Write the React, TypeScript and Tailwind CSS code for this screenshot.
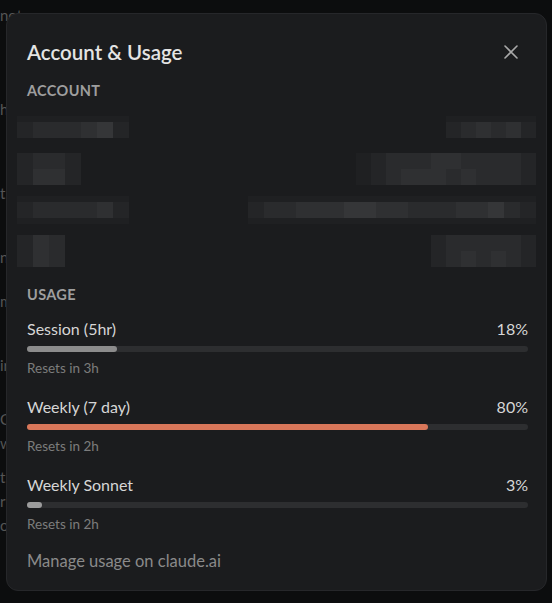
import React from 'react';

const shades: Record<string, string> = {
  '0': 'bg-transparent',
  '1': 'bg-[#1f2022]',
  '2': 'bg-[#242527]',
  '3': 'bg-[#2a2b2d]',
  '4': 'bg-[#2f3032]',
  '5': 'bg-[#353638]',
};

// pixelated placeholder for redacted account values
const Pixels = ({ cells, heights, w = 16 }: { cells: string[]; heights: number[]; w?: number }) => (
  <div className="flex flex-col">
    {cells.map((row, i) => (
      <div key={i} className="flex" style={{ height: heights[i] }}>
        {row.split('').map((c, j) => (
          <div key={j} className={shades[c]} style={{ width: w }} />
        ))}
      </div>
    ))}
  </div>
);

const UsageRow = ({
  label,
  pct,
  reset,
  fill,
}: {
  label: string;
  pct: number;
  reset: string;
  fill: string;
}) => (
  <div className="flex flex-col">
    <div className="flex justify-between text-[16px] leading-5 text-[#d6d6d6]">
      <span>{label}</span>
      <span>{pct}%</span>
    </div>
    <div className="mt-[7px] h-1.5 w-full rounded-full bg-[#2d2e30]">
      <div className={`h-1.5 rounded-full ${fill}`} style={{ width: `${pct}%` }} />
    </div>
    <p className="mt-[8px] text-[13.5px] leading-4 text-[#7c7c7c]">{reset}</p>
  </div>
);

export default function App() {
  return (
    <div
      className="relative w-[552px] h-[603px] overflow-hidden bg-[#0c0d0e]"
      style={{ fontFamily: 'Lato, "Noto Sans", sans-serif' }}
    >
      <div className="text-[15px] leading-[24px] text-[#555] pt-[3px] whitespace-nowrap">
        <p>not.</p>
        <p className="mt-[70px]">h</p>
        <p className="mt-[60px]">t</p>
        <p className="mt-[40px]">n</p>
        <p className="mt-[20px]">m</p>
        <p className="mt-[40px]">ir</p>
        <p className="mt-[30px]">C</p>
        <p>w</p>
        <p className="mt-[10px]">t</p>
        <p>r</p>
        <p>o</p>
      </div>

      <div className="absolute left-[6px] top-[13px] w-[541px] h-[578px] rounded-xl border border-[#26272a] bg-[#1b1c1e] pl-5 pr-[18px] pt-6">
        <div className="flex items-center justify-between">
          <h1 className="text-[20.5px] leading-7 font-semibold text-[#e4e4e4]">Account &amp; Usage</h1>
          <svg width="14" height="14" viewBox="0 0 14 14" className="mr-[10px]">
            <path d="M1 1L13 13M13 1L1 13" stroke="#a9a9a9" strokeWidth="1.6" strokeLinecap="round" />
          </svg>
        </div>

        <h2 className="mt-[15px] text-[14.5px] leading-5 font-bold tracking-wide text-[#9e9e9e]">ACCOUNT</h2>

        <div className="-ml-[10px] -mr-[8px] flex flex-col">
          <div className="mt-[15px] flex justify-between">
            <Pixels cells={['1111111', '2333452']} heights={[6, 16]} />
            <Pixels cells={['111111', '234342']} heights={[6, 16]} w={15} />
          </div>
          <div className="mt-[15px] flex justify-between">
            <Pixels cells={['2332', '2442']} heights={[16, 16]} />
            <Pixels cells={['123334433332', '123444343332']} heights={[16, 16]} w={15} />
          </div>
          <div className="mt-[11px] flex justify-between">
            <Pixels cells={['1111111', '2333342', '1111111']} heights={[6, 16, 6]} />
            <Pixels
              cells={['111111111111111111', '233444554433344532', '111111111111111111']}
              heights={[6, 16, 6]}
            />
          </div>
          <div className="mt-[11px] flex justify-between">
            <Pixels cells={['243', '243']} heights={[16, 16]} />
            <Pixels cells={['2333332', '2343432']} heights={[16, 16]} w={15} />
          </div>
        </div>

        <h2 className="mt-[18px] text-[14.5px] leading-5 font-bold tracking-wide text-[#9e9e9e]">USAGE</h2>

        <div className="mt-[14px] flex flex-col gap-[21px]">
          <UsageRow label="Session (5hr)" pct={18} reset="Resets in 3h" fill="bg-[#8c8c8c]" />
          <UsageRow label="Weekly (7 day)" pct={80} reset="Resets in 2h" fill="bg-[#d9775a]" />
          <UsageRow label="Weekly Sonnet" pct={3} reset="Resets in 2h" fill="bg-[#9c9c9c]" />
        </div>

        <p className="mt-[19px] text-[16.5px] leading-5 text-[#8a8a8a]">Manage usage on claude.ai</p>
      </div>
    </div>
  );
}
